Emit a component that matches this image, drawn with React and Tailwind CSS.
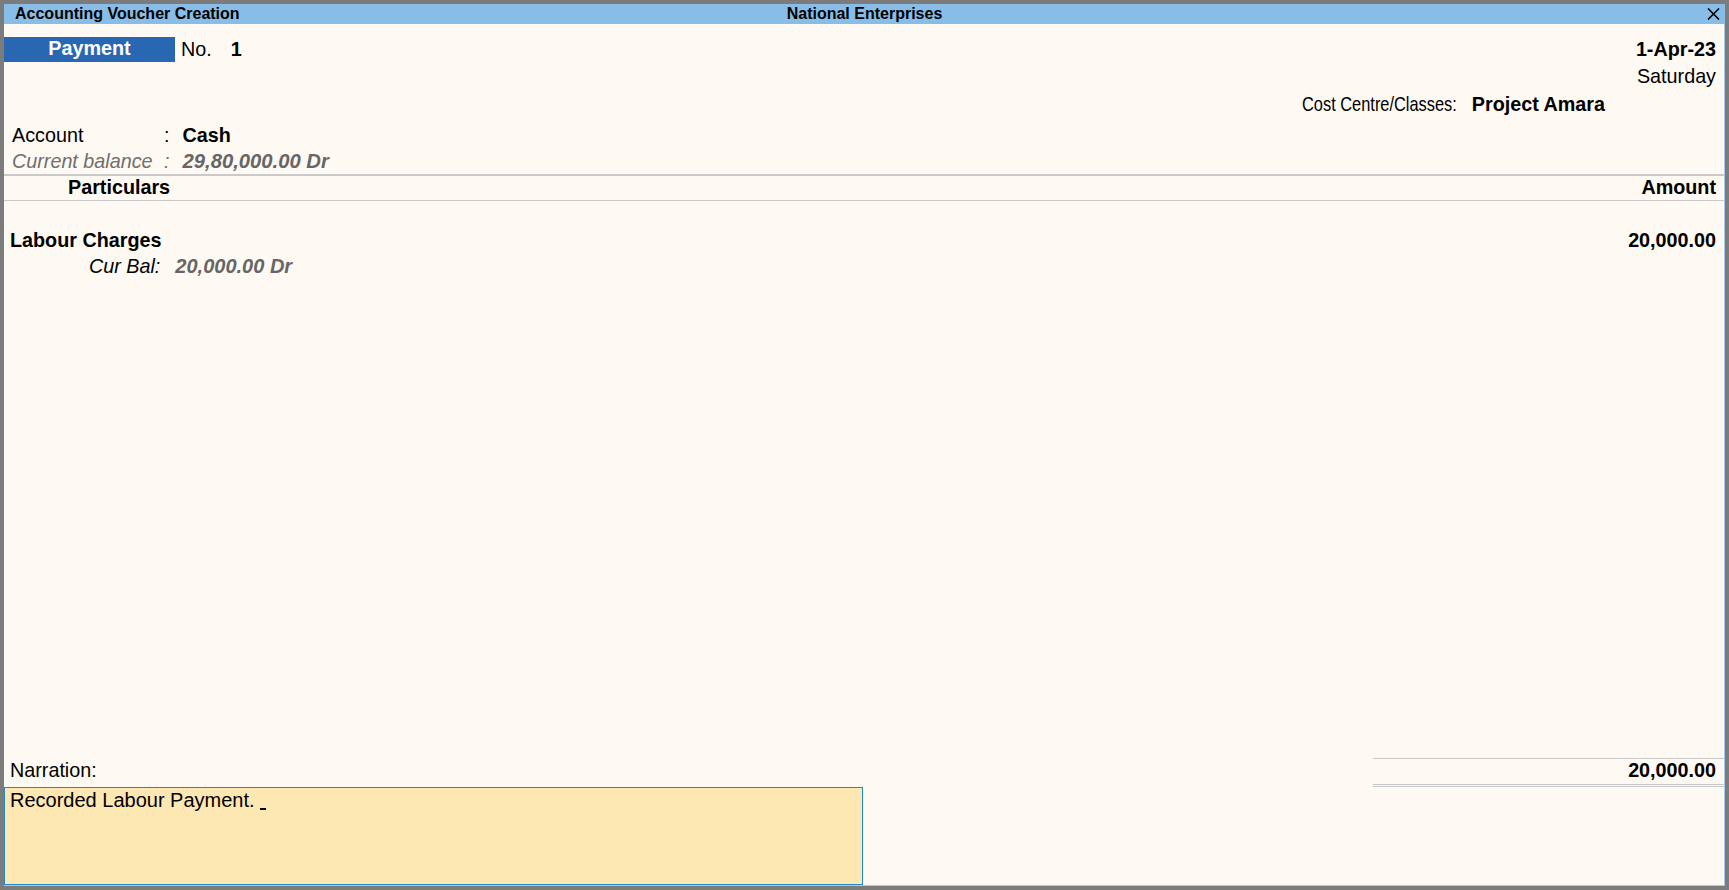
export default function App() {
  return (
    <div className="w-[1729px] h-[890px] bg-[#7c7c7c] p-[4px] flex flex-col font-['Liberation_Sans',Arial,sans-serif] text-black overflow-hidden">
      {/* Title bar */}
      <div className="h-[20px] shrink-0 bg-[#87bde6] grid grid-cols-[1fr_auto_1fr] items-center text-[16px] font-bold leading-[20px]">
        <div className="pl-[11px] whitespace-nowrap">Accounting Voucher Creation</div>
        <div className="whitespace-nowrap">National Enterprises</div>
        <div className="flex justify-end pr-[5px]">
          <svg width="13" height="12" viewBox="0 0 13 12" className="block">
            <path d="M1 0.5 L12 11.5 M12 0.5 L1 11.5" stroke="#000" strokeWidth="1.6" fill="none" />
          </svg>
        </div>
      </div>

      {/* Voucher body */}
      <div className="flex-1 bg-[#fef9f2] border-r border-b border-[#a9cbe9] flex flex-col text-[19.75px]">
        {/* Voucher type, number and date */}
        <div className="mt-[13px] flex justify-between items-start">
          <div className="flex items-center">
            <div className="w-[171px] h-[25px] bg-[#2a67b3] text-white font-bold text-center leading-[23px]">Payment</div>
            <span className="ml-[6px] leading-[23px]">No.</span>
            <span className="ml-[19px] font-bold leading-[23px]">1</span>
          </div>
          <div className="pr-[8px] text-right">
            <div className="font-bold leading-[25px]">1-Apr-23</div>
            <div className="mt-[2px] leading-[25px]">Saturday</div>
          </div>
        </div>

        {/* Cost centre */}
        <div className="mt-[3px] flex justify-end pr-[119px] leading-[25px]">
          <span className="w-[170px] whitespace-nowrap">
            <span className="inline-block origin-left scale-x-[0.83]">Cost Centre/Classes:</span>
          </span>
          <span className="font-bold whitespace-nowrap">Project Amara</span>
        </div>

        {/* Account */}
        <div className="mt-[5px] pl-[8px] flex leading-[26px]">
          <span className="w-[152px]">Account</span>
          <span>:</span>
          <span className="ml-[13px] font-bold">Cash</span>
        </div>
        <div className="pl-[8px] flex leading-[26px] italic text-[#6f6f6f]">
          <span className="w-[152px]">Current balance</span>
          <span>:</span>
          <span className="ml-[13px] font-bold text-[#666666] text-[20.25px]">29,80,000.00 Dr</span>
        </div>
        <div className="h-[2px] bg-[#c9c9c9]" />

        {/* Column headings */}
        <div className="h-[25px] border-b border-[#c9c9c9] flex justify-between font-bold leading-[22px]">
          <span className="pl-[64px]">Particulars</span>
          <span className="pr-[8px]">Amount</span>
        </div>

        {/* Ledger entry */}
        <div className="mt-[26px] flex justify-between leading-[26px] font-bold">
          <span className="pl-[6px]">Labour Charges</span>
          <span className="pr-[8px]">20,000.00</span>
        </div>
        <div className="pl-[85px] flex leading-[26px] italic">
          <span>Cur Bal:</span>
          <span className="ml-[15px] font-bold text-[#666666] text-[20px]">20,000.00 Dr</span>
        </div>

        <div className="flex-1" />

        {/* Narration and total */}
        <div className="h-[29px] flex">
          <div className="flex-1 pl-[6px] pt-[1px] leading-[23px]">Narration:</div>
          <div className="w-[351px] border-t border-b-[3px] border-double border-[#c8c8c8] text-right pr-[8px] font-bold leading-[23px]">
            20,000.00
          </div>
        </div>
        <div className="h-[98px] w-[859px] bg-[#fde7b2] border border-[#1e8bd1] pl-[5px] pt-[1px] leading-[23px] text-[20px]">
          Recorded Labour Payment.{" "}
          <span className="inline-block w-[6px] h-[2px] bg-black align-[-3px]" />
        </div>
      </div>
    </div>
  );
}
